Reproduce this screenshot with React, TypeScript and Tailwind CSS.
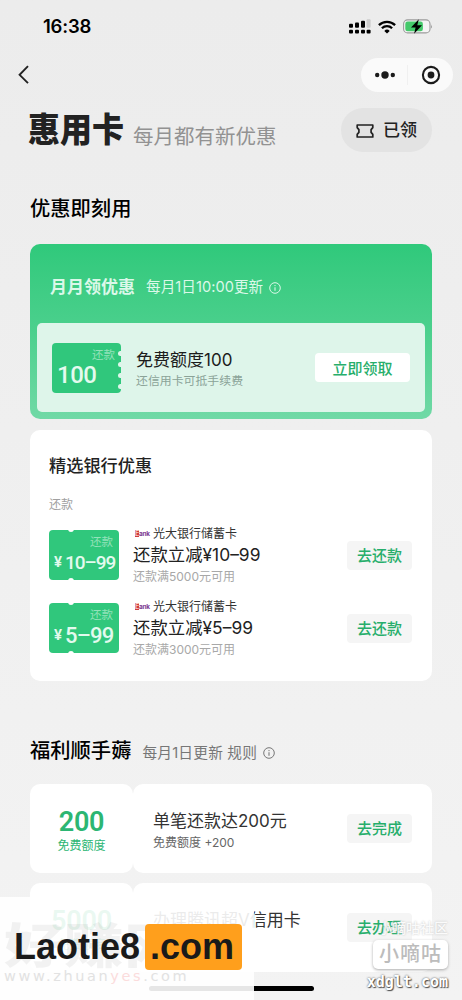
import { useState } from 'react';
import type { ReactNode } from 'react';

interface TicketProps {
  amount: string;
  yen?: boolean;
  edge: 'side' | 'middle';
  amountClass: string;
}

interface BankOffer {
  id: number;
  amount: string;
  amountClass: string;
  title: string;
  desc: string;
}

interface Task {
  id: number;
  amount: string;
  title: string;
  desc: string;
  action: string;
}

const bankOffers: BankOffer[] = [
  { id: 1, amount: '10–99', amountClass: 'text-[19px] tracking-[-1px]', title: '还款立减¥10–99', desc: '还款满5000元可用' },
  { id: 2, amount: '5–99', amountClass: 'text-[22px] tracking-[-0.8px]', title: '还款立减¥5–99', desc: '还款满3000元可用' },
];

const tasks: Task[] = [
  { id: 1, amount: '200', title: '单笔还款达200元', desc: '免费额度 +200', action: '去完成' },
  { id: 2, amount: '5000', title: '办理腾讯超V信用卡', desc: '', action: '去办理' },
];

function InfoIcon() {
  return (
    <svg width="12" height="12" viewBox="0 0 12 12" fill="none" stroke="currentColor">
      <circle cx="6" cy="6" r="5.3" strokeWidth="1" />
      <path d="M6 5.2v3.6" strokeWidth="1.1" />
      <circle cx="6" cy="3.6" r="0.7" fill="currentColor" stroke="none" />
    </svg>
  );
}

function StatusBar() {
  return (
    <div className="flex h-[50px] items-center justify-between pt-[3px] pr-[29px] pl-[43px]">
      <span className="text-[18.5px] leading-none font-semibold tracking-[-0.2px] text-black">16:38</span>
      <div className="flex items-center gap-[7px]">
        {/* 双卡信号 */}
        <svg width="22" height="15" viewBox="0 0 22 15">
          <g fill="#000">
            <rect x="0" y="4.8" width="4" height="4" rx="1" />
            <rect x="6" y="3.4" width="4" height="5.4" rx="1" />
            <rect x="12" y="1.8" width="4" height="7" rx="1" />
            <rect x="0" y="10.8" width="4" height="3.8" rx="1" />
            <rect x="6" y="10.8" width="4" height="3.8" rx="1" />
            <rect x="12" y="10.8" width="4" height="3.8" rx="1" />
            <rect x="17.6" y="10.8" width="4" height="3.8" rx="1" />
          </g>
          <rect x="17.6" y="0.2" width="4" height="8.6" rx="1" fill="#ccc" />
        </svg>
        <svg width="18" height="14" viewBox="0 0 18 14" fill="none" stroke="#000" strokeWidth="2.3">
          <path d="M0.9 5.1a11.6 11.6 0 0 1 16.2 0" />
          <path d="M3.9 8.2a7.3 7.3 0 0 1 10.2 0" />
          <path d="M9 13.6 6.3 10.9a3.9 3.9 0 0 1 5.4 0z" fill="#000" stroke="none" />
        </svg>
        <svg width="30" height="15" viewBox="0 0 30 15">
          <rect x="0.6" y="0.9" width="26.4" height="13" rx="4" fill="#f4f4f4" stroke="#9b9b9b" strokeWidth="1.1" />
          <rect x="2.3" y="2.5" width="17.6" height="9.8" rx="2.4" fill="#45c96b" />
          <path d="M28.2 5.4q1.4 2 0 4z" fill="#888" />
          <path d="M15.8 0.2 8 8.6h4.6l-1.5 6.2 7.9-8.6h-4.7z" fill="#000" />
        </svg>
      </div>
    </div>
  );
}

function NavBar() {
  return (
    <div className="flex h-[50px] items-center justify-between pr-[9px] pl-[18px]">
      <svg width="12" height="20" viewBox="0 0 12 20" fill="none" stroke="#222" strokeWidth="1.9">
        <path d="M10 1.2 1.6 9.8 10 18.2" />
      </svg>
      <div className="flex h-[34px] w-[92px] items-center rounded-full bg-[#fafafa]">
        <div className="flex flex-1 items-center justify-center pl-[2px]">
          <svg width="22" height="10" viewBox="0 0 22 10" fill="#1b1b1b">
            <circle cx="3.2" cy="5" r="2.2" />
            <circle cx="11" cy="5" r="3.7" />
            <circle cx="18.8" cy="5" r="2.2" />
          </svg>
        </div>
        <div className="h-[20px] w-px bg-[#f0f0f0]" />
        <div className="flex flex-1 items-center justify-center pl-[2px]">
          <svg width="20" height="20" viewBox="0 0 20 20">
            <circle cx="10" cy="10" r="8.1" fill="none" stroke="#1b1b1b" strokeWidth="2.1" />
            <circle cx="10" cy="10" r="3.4" fill="#1b1b1b" />
          </svg>
        </div>
      </div>
    </div>
  );
}

function Ticket({ amount, yen, edge, amountClass }: TicketProps) {
  return (
    <div
      className={`relative flex h-[50px] shrink-0 flex-col overflow-hidden rounded-[4px] bg-[#30c77c] ${
        edge === 'side' ? 'w-[69px]' : 'w-[70px]'
      }`}
    >
      <span className="mt-[5px] mr-[6px] self-end text-[11.5px] leading-[14px] text-[#94e2ba]">还款</span>
      <div className="flex h-[27px] items-center pl-[5px] text-[#e3faee]">
        {yen && <span className="mr-[3px] font-[Roboto] text-[15px] leading-none font-semibold">¥</span>}
        <span className={`font-[Roboto] leading-none font-medium whitespace-nowrap ${amountClass}`}>{amount}</span>
      </div>
      {edge === 'side' ? (
        <div className="absolute top-[8px] -right-[2px] flex flex-col gap-[6px]">
          <i className="size-[5px] rounded-full bg-[#def5ea]" />
          <i className="size-[5px] rounded-full bg-[#def5ea]" />
          <i className="size-[5px] rounded-full bg-[#def5ea]" />
          <i className="size-[5px] rounded-full bg-[#def5ea]" />
        </div>
      ) : (
        <>
          <i className="absolute -top-[4px] left-[19px] size-[6px] rounded-full bg-white" />
          <i className="absolute -bottom-[4px] left-[19px] size-[6px] rounded-full bg-white" />
        </>
      )}
    </div>
  );
}

function ActionButton({ children, onClick }: { children: ReactNode; onClick?: () => void }) {
  return (
    <button
      onClick={onClick}
      className="h-[29px] w-[65px] shrink-0 rounded-[4px] bg-[#f5f5f5] text-[15px] leading-none font-medium text-[#27ae6b]"
    >
      {children}
    </button>
  );
}

function BankRow({ offer }: { offer: BankOffer }) {
  return (
    <div className="flex h-[60px] items-center">
      <Ticket amount={offer.amount} amountClass={offer.amountClass} edge="middle" yen />
      <div className="ml-[14px] flex flex-1 flex-col pt-[1px]">
        <div className="flex h-[16px] items-center text-[12px] text-[#333]">
          <span className="mr-[2px] flex w-[18px] items-end pl-[2px] leading-none">
            <b className="w-[4px] overflow-hidden bg-[#cf3b3f] text-[7px] leading-[7px] text-[#f6c9c4]">E</b>
            <b className="text-[6.5px] leading-[6px] tracking-[-0.3px] text-[#803a93]">ank</b>
          </span>
          光大银行储蓄卡
        </div>
        <div className="flex h-[27px] items-center text-[17.4px] whitespace-nowrap text-[#222]">{offer.title}</div>
        <div className="flex h-[17px] items-center text-[12px] text-[#a8a8a8]">{offer.desc}</div>
      </div>
      <ActionButton>去还款</ActionButton>
    </div>
  );
}

function TaskRow({ task }: { task: Task }) {
  return (
    <div className="flex h-[89px]">
      <div className="flex w-[103px] flex-col items-center justify-center rounded-[10px] bg-white pt-[4px] text-[#2cb673]">
        <span className="font-[Roboto] text-[27px] leading-[30px] font-semibold tracking-[-0.2px]">{task.amount}</span>
        <span className="text-[12px] leading-[17px]">免费额度</span>
      </div>
      <div className="flex flex-1 items-center rounded-[10px] bg-white pr-[20px] pl-[20px]">
        <div className="flex flex-1 flex-col pt-[2px] whitespace-nowrap text-[#333]">
          <span className="text-[17px] leading-[24px]">{task.title}</span>
          <span className="h-[18px] text-[12px] leading-[19px] text-[#666]">{task.desc}</span>
        </div>
        <ActionButton>{task.action}</ActionButton>
      </div>
    </div>
  );
}

export default function App() {
  const [claimed, setClaimed] = useState(false);

  return (
    <div className="relative h-[1000px] w-[462px] overflow-hidden bg-linear-to-b from-[#ececec] to-[#f3f3f3] font-[Inter,'Noto_Sans_CJK_SC',sans-serif]">
      <StatusBar />
      <NavBar />

      {/* 标题 */}
      <header className="flex h-[60px] items-center justify-between pr-[30px] pl-[28px]">
        <div className="flex items-center">
          <h1 className="scale-y-[1.08] text-[32px] leading-none font-black text-[#222]">惠用卡</h1>
          <p className="mt-[14px] ml-[9px] text-[20.5px] leading-none text-[#929292]">每月都有新优惠</p>
        </div>
        <button className="flex h-[44px] w-[91px] items-center justify-center gap-[9px] rounded-full bg-[#e3e3e3] pt-[1px] text-[17px] font-medium text-[#222]">
          <svg width="18" height="14" viewBox="0 0 18 14" fill="none" stroke="#222" strokeWidth="1.7">
            <path d="M1.2 1h15.6v2.6l-1.7 2v2.8l1.7 2V13H1.2v-2.6l1.7-2V5.6l-1.7-2z" strokeLinejoin="round" />
          </svg>
          已领
        </button>
      </header>

      <main className="px-[30px]">
        <h2 className="mt-[33px] flex h-[30px] items-center pt-[2px] text-[20.3px] font-medium text-black">优惠即刻用</h2>

        {/* 月月领优惠 */}
        <section className="mt-[21px] h-[175px] rounded-[10px] bg-linear-to-b from-[#2fc97b] via-[#4bd08d] to-[#70d9a6] px-[7px]">
          <div className="flex h-[79px] items-center pt-[9px] pl-[13px] text-[#dbf8e9]">
            <span className="text-[17px] font-bold">月月领优惠</span>
            <span className="mr-[6px] ml-[11px] text-[14.6px] tracking-[0.05px]">每月1日10:00更新</span>
            <InfoIcon />
          </div>
          <div className="flex h-[89px] items-center rounded-[5px] bg-[#def5ea] pr-[15px] pl-[15px]">
            <Ticket amount="100" amountClass="text-[24px] tracking-[-0.5px]" edge="side" />
            <div className="ml-[15px] flex-1 pt-[2px]">
              <div className="text-[17px] leading-[24px] text-[#1c1c1c]">免费额度100</div>
              <div className="text-[11.9px] leading-[18px] text-[#8ba398]">还信用卡可抵手续费</div>
            </div>
            <button
              onClick={() => setClaimed(!claimed)}
              className="h-[29px] w-[95px] rounded-[4px] bg-white pt-[1px] text-[15px] leading-none font-medium text-[#27ae6b]"
            >
              {claimed ? '已领' : '立即领取'}
            </button>
          </div>
        </section>

        {/* 精选银行优惠 */}
        <section className="mt-[11px] h-[251px] rounded-[10px] bg-white pr-[20px] pl-[19px]">
          <h3 className="flex h-[70px] items-center pt-[2px] text-[17.2px] font-medium text-[#222]">精选银行优惠</h3>
          <p className="h-[25px] text-[12px] leading-[10px] text-[#a0a0a0]">还款</p>
          <div className="flex flex-col gap-[13px]">
            {bankOffers.map((offer) => (
              <BankRow key={offer.id} offer={offer} />
            ))}
          </div>
        </section>

        {/* 福利顺手薅 */}
        <div className="mt-[54px] flex h-[30px] items-center pt-[2px]">
          <h2 className="text-[20.3px] font-medium text-black">福利顺手薅</h2>
          <span className="mt-[4px] mr-[6px] ml-[11px] text-[14.7px] tracking-[0.2px] text-[#777]">每月1日更新 规则</span>
          <span className="mt-[4px] text-[#777]">
            <InfoIcon />
          </span>
        </div>
        <section className="mt-[19px] flex flex-col gap-[10px]">
          {tasks.map((task) => (
            <TaskRow key={task.id} task={task} />
          ))}
        </section>
      </main>

      {/* 底部横条 */}
      <div className="absolute top-[986px] left-[149px] h-[5px] w-[165px] rounded-full bg-black" />

      {/* 左下水印 */}
      <div className="absolute top-[897px] left-0 h-[103px] w-[254px] bg-white/90" />
      <div className="absolute top-[918px] left-[4px] origin-center scale-y-[0.8] text-[60px] leading-[54px] font-black whitespace-nowrap text-black/5">好赚网</div>
      <div className="absolute top-[967px] left-[4px] font-['DejaVu_Sans'] text-[14.5px] leading-[18px] tracking-[2.6px] whitespace-nowrap text-[#e2e2e2]">
        www.zhuan<span className="text-[#fbdcdc]">yes</span>.com
      </div>
      <div className="absolute top-[924px] left-[14px] flex items-center font-['Liberation_Sans'] text-[36px] leading-[46px] font-bold text-[#1a1a1a]">
        <span className="w-[131px]">Laotie8</span>
        <span className="h-[46px] w-[97px] rounded-[4px] bg-[#ff9f1c] pl-[5px]">.com</span>
      </div>

      {/* 右下水印 */}
      <div className="absolute top-[920px] left-[365px] flex w-[83px] flex-col items-end">
        <span className="text-[14px] leading-[16px] font-medium whitespace-nowrap text-white/90 [text-shadow:0_0_2px_#bbb]">小嘀咕社区</span>
        <span className="mt-[4px] h-[29px] w-[75px] rounded-[5px] bg-white text-center text-[20px] leading-[29px] font-medium tracking-[1px] text-[#bcbcbc] shadow-[0_1px_3px_#aaa]">
          小嘀咕
        </span>
        <span className="mt-[3px] font-['DejaVu_Sans_Mono'] text-[15px] leading-[20px] font-bold text-white [text-shadow:0_0_2px_#444,1px_1px_1px_#555]">xdglt.com</span>
      </div>
    </div>
  );
}
